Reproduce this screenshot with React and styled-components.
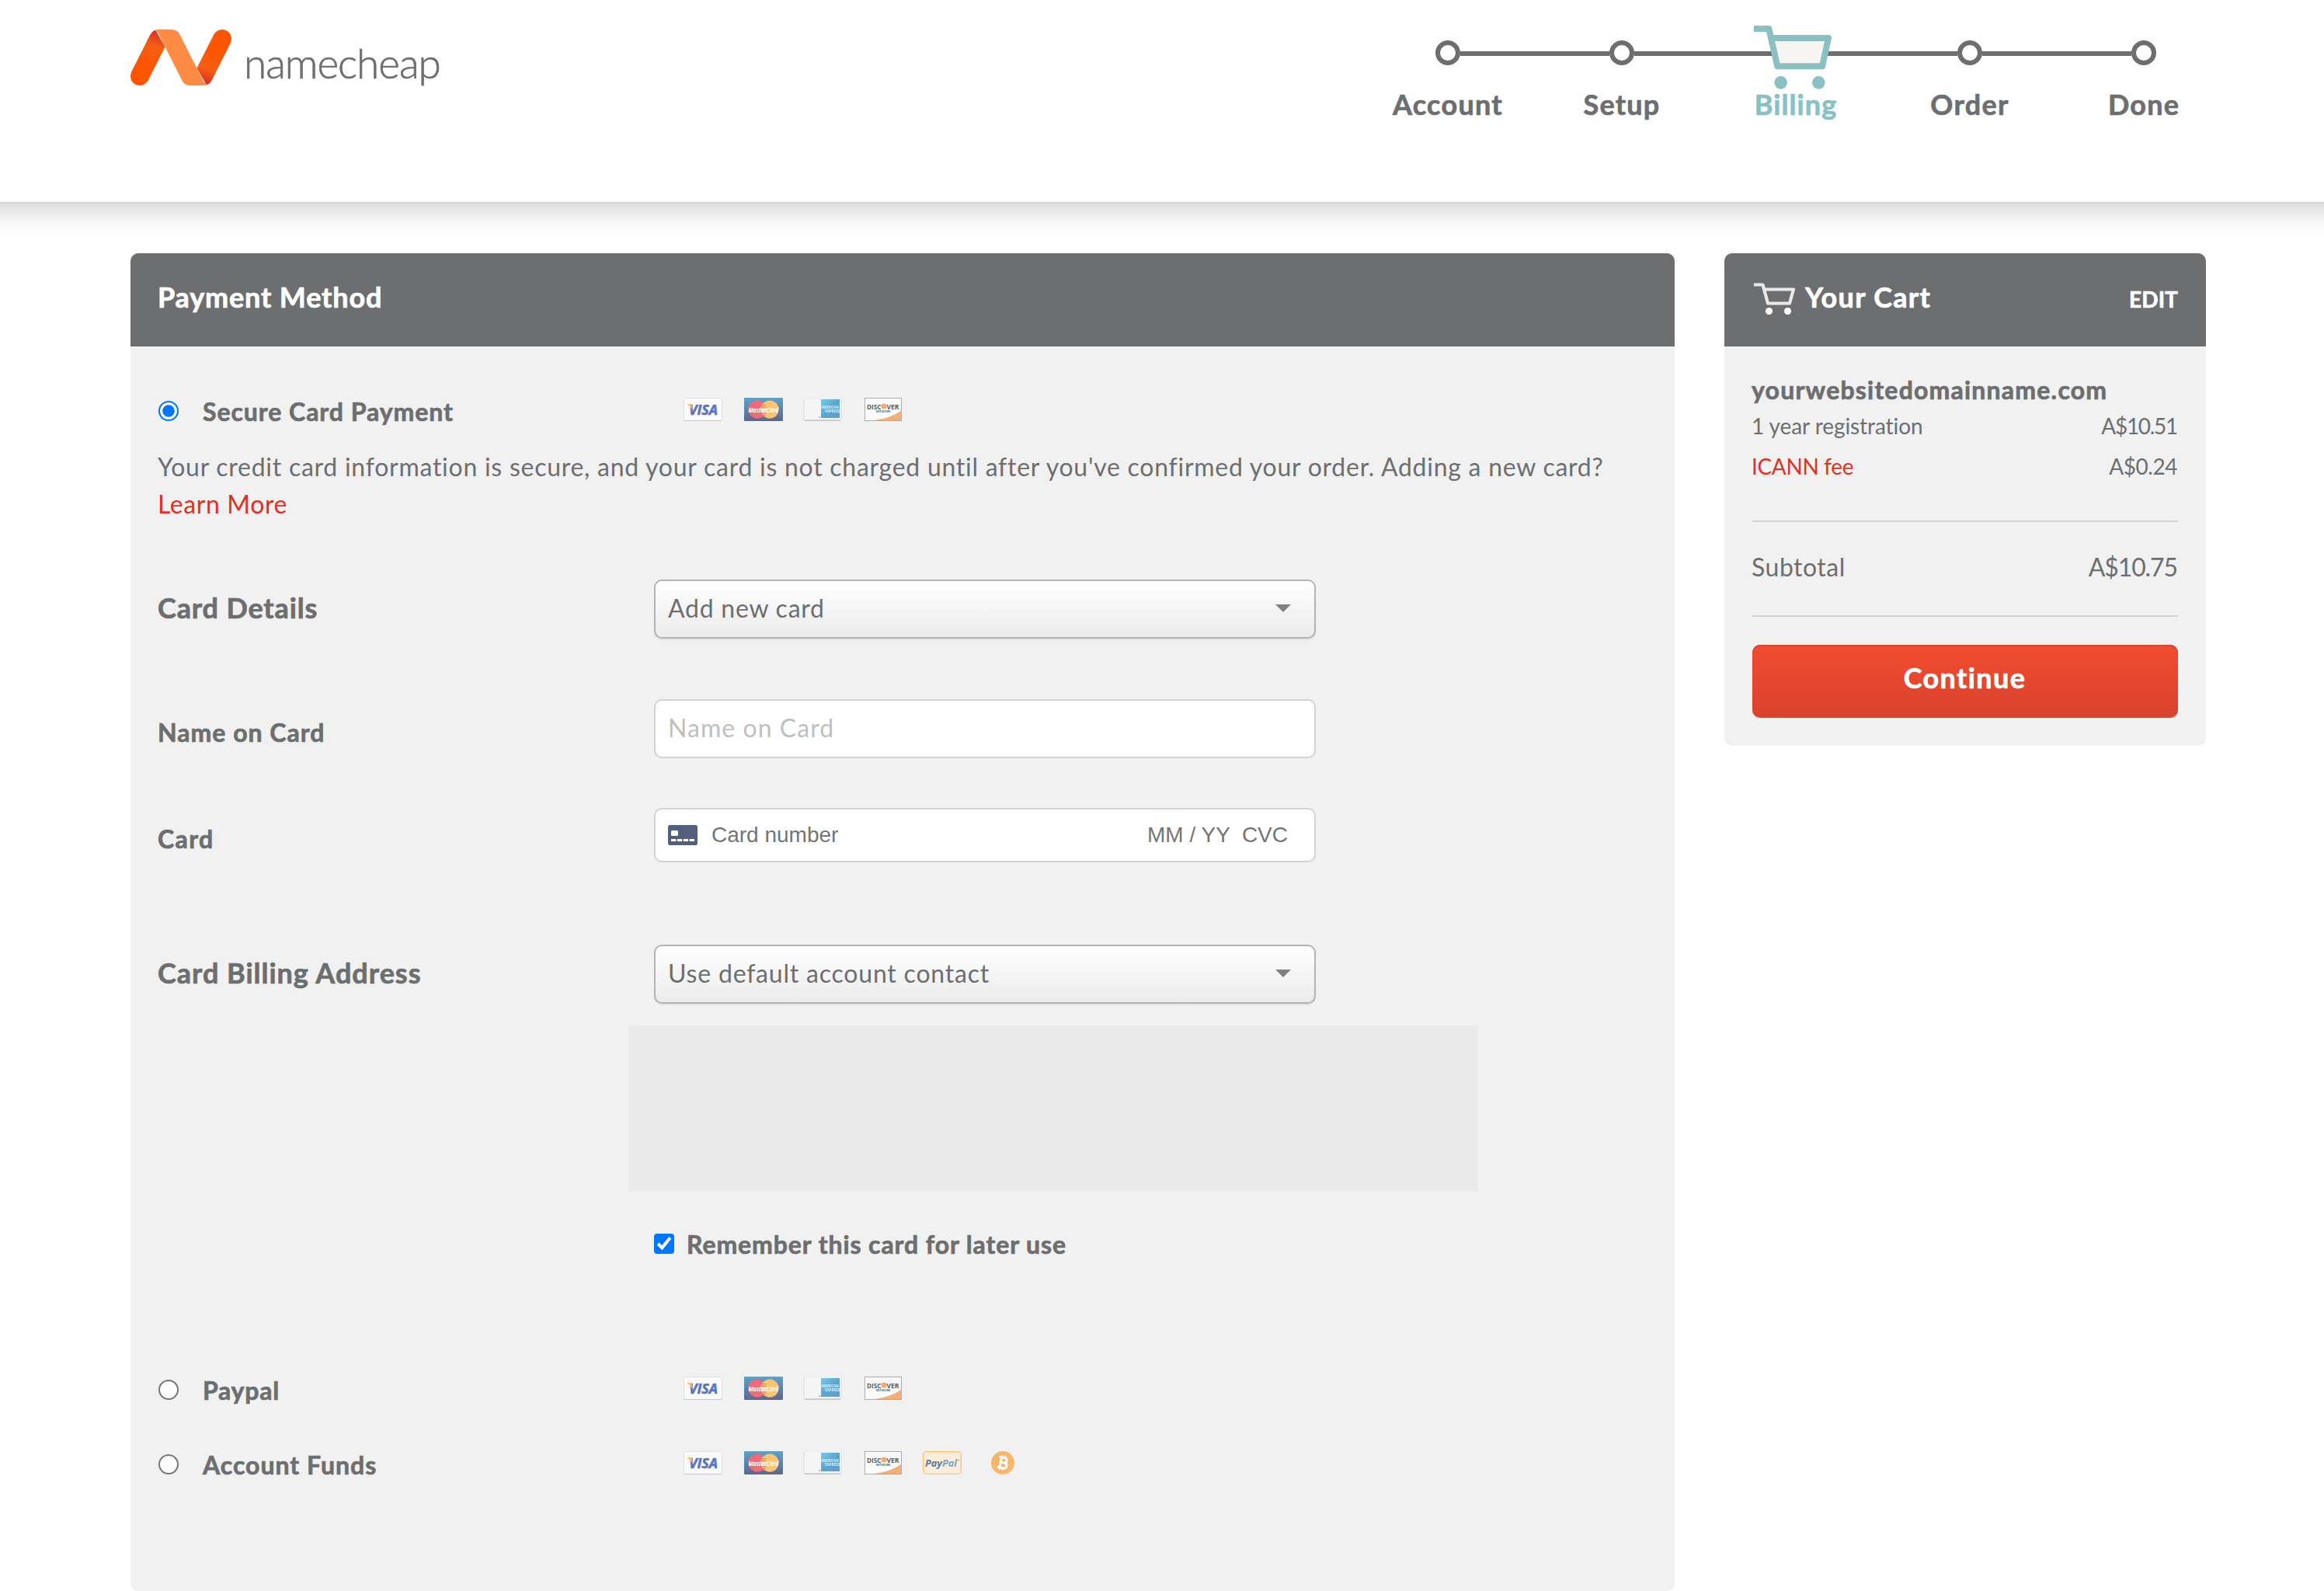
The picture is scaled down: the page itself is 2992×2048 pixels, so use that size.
import React, { useState } from 'react';
import styled, { createGlobalStyle, css } from 'styled-components';

const colors = {
  grey: '#6d6e70',
  panel: '#f1f1f1',
  line: '#d3d3d3',
  teal: '#8bc0c3',
  red: '#e0311f',
};

const GlobalStyle = createGlobalStyle`
  * {
    box-sizing: border-box;
  }

  body {
    margin: 0;
    background: #fefefe;
    color: ${colors.grey};
    font-family: Lato, 'Open Sans', sans-serif;
    font-size: 32px;
    overflow-x: hidden;
  }
`;

const tracking = css`
  letter-spacing: ${({ $track }) => $track || 0}px;
`;

const bold = css`
  font-weight: 700;
  -webkit-text-stroke: 0.7px currentColor;
`;

const Page = styled.div`
  width: 2992px;
  height: 2048px;
  overflow: hidden;
`;

/* ---------- header ---------- */

const Header = styled.header`
  display: flex;
  justify-content: space-between;
  height: 262px;
  padding: 0 120px 0 168px;
  border-bottom: 2px solid #d5d5d5;
`;

const HeaderShadow = styled.div`
  height: 38px;
  background: linear-gradient(#dedede, #efefef 42%, #fafafa 75%, #fefefe);
`;

const Brand = styled.div`
  display: flex;
  align-items: flex-start;
  gap: 16px;
  padding-top: 38px;
`;

const BrandMark = styled.svg`
  width: 130px;
  height: 72px;
`;

const BrandName = styled.span`
  margin-top: 11px;
  font-size: 53px;
  font-weight: 300;
  line-height: 64px;
  -webkit-text-stroke: 0.7px currentColor;
  ${tracking}
`;

const Steps = styled.ol`
  display: grid;
  grid-template-columns: repeat(5, 224px);
  margin: 0;
  padding: 52px 0 0;
  list-style: none;
`;

const StepItem = styled.li`
  color: ${({ $active }) => ($active ? colors.teal : colors.grey)};
  font-size: 36px;
  line-height: 40px;
  text-align: center;
`;

const StepTrack = styled.div`
  position: relative;
  display: flex;
  align-items: center;
  height: 32px;
  margin-bottom: 30px;
`;

const StepLine = styled.span`
  flex: 1;
  height: 6px;
  margin-top: 2px;
  background: ${({ $hidden }) => ($hidden ? 'transparent' : colors.grey)};
`;

const StepDot = styled.span`
  width: 32px;
  height: 32px;
  border: 6px solid ${colors.grey};
  border-radius: 50%;
  background: #fefefe;
`;

const StepCart = styled.svg`
  position: absolute;
  top: -19px;
  left: 58px;
  width: 100px;
  height: 82px;
`;

const StepName = styled.span`
  ${bold}
  ${tracking}
`;

/* ---------- panels ---------- */

const Content = styled.main`
  display: grid;
  grid-template-columns: 1988px 620px;
  align-items: start;
  gap: 64px;
  padding: 26px 0 0 168px;
`;

const Panel = styled.section`
  min-height: ${({ $tall }) => ($tall ? '1722px' : '0')};
  border-radius: 10px;
  background: ${colors.panel};
  overflow: hidden;
`;

const PanelHeader = styled.div`
  display: flex;
  align-items: center;
  height: 120px;
  padding: 0 36px 8px;
  background: ${colors.grey};
  color: #fff;
`;

const PanelTitle = styled.h2`
  margin: 0 0 0 -1px;
  font-size: 36px;
  line-height: 44px;
  ${bold}
  ${tracking}
`;

const PaymentBody = styled.div`
  padding: 62px 36px 0;
`;

const CartBody = styled.div`
  padding: 36px;
`;

/* ---------- payment form ---------- */

const Method = styled.label`
  display: grid;
  grid-template-columns: 26px 586px auto;
  column-gap: 32px;
  align-items: center;
  justify-content: start;
  height: 42px;
  margin-top: ${({ $top }) => $top || 0}px;
`;

// 13px control at double size keeps the native border proportions
const Choice = styled.input`
  width: 13px;
  height: 13px;
  margin: 0;
  zoom: 2;
`;

const MethodName = styled.span`
  margin: 2px 0 0 -1px;
  line-height: 40px;
  ${bold}
  ${tracking}
`;

const Cards = styled.div`
  display: flex;
  gap: 27px;
  margin: -4px 0 0 0;
`;

const CardArt = styled.svg`
  display: block;
  width: 50px;
  height: 30px;
  overflow: visible;
`;

const Note = styled.p`
  margin: 27px 0 -1px -1px;
  line-height: 48px;
  white-space: nowrap;
  ${tracking}
`;

const NoteLink = styled.a`
  display: block;
  color: ${colors.red};
  ${tracking}
`;

const FormRow = styled.div`
  display: grid;
  grid-template-columns: 638px 852px;
  height: ${({ $height }) => $height || 76}px;
  margin-top: ${({ $top }) => $top}px;
`;

const FieldLabel = styled.span`
  margin: ${({ $large }) => ($large ? '-2px' : '5px')} 0 0 -1px;
  font-size: ${({ $large }) => ($large ? '36px' : '32px')};
  line-height: ${({ $height }) => $height || 76}px;
  ${bold}
  ${tracking}
`;

const Select = styled.button`
  display: flex;
  align-items: center;
  justify-content: space-between;
  height: 76px;
  padding: 0 30px 3px 16px;
  border: 2px solid #b3b3b3;
  border-radius: 10px;
  background: linear-gradient(#fff, #ebebeb);
  box-shadow: 0 2px 1px rgba(0, 0, 0, 0.06);
  color: ${colors.grey};
  font: inherit;
  line-height: 40px;
  ${tracking}
`;

const Caret = styled.span`
  border: 10px solid transparent;
  border-top-color: #808184;
  border-bottom: 0;
`;

const Input = styled.input`
  height: 76px;
  padding: 0 16px 4px;
  border: 2px solid ${colors.line};
  border-radius: 10px;
  background: #fff;
  color: ${colors.grey};
  font: inherit;
  ${tracking}

  &::placeholder {
    color: #bfbfbf;
    opacity: 1;
  }
`;

const CardInput = styled.div`
  display: flex;
  align-items: center;
  height: 70px;
  padding: 0 34px 0 16px;
  border: 2px solid ${colors.line};
  border-radius: 10px;
  background: #fff;
  color: #757575;
  font: 28px 'Liberation Sans', Arial, sans-serif;
`;

const CardNumber = styled.span`
  flex: 1;
  margin-left: 18px;
`;

const Cvc = styled.span`
  margin-left: 15px;
`;

const AddressBox = styled.div`
  width: 1094px;
  height: 213px;
  margin: 28px 0 0 605px;
  background: #eaeaea;
`;

const Remember = styled.label`
  display: flex;
  align-items: center;
  gap: 17px;
  height: 42px;
  margin: 47px 0 0 638px;
`;

/* ---------- cart ---------- */

const CartIcon = styled.svg`
  width: 54px;
  height: 42px;
  margin: 3px 13px 0 2px;
`;

const EditLink = styled.a`
  margin: 6px 0 0 auto;
  font-size: 28px;
  line-height: 34px;
  ${bold}
  ${tracking}
`;

const Domain = styled.div`
  margin: 0 0 8px -1px;
  line-height: 40px;
  ${bold}
  ${tracking}
`;

const CartLine = styled.div`
  display: flex;
  justify-content: space-between;
  margin: 0 1px ${({ $gap }) => $gap || 0}px -1px;
  font-size: ${({ $large }) => ($large ? '32px' : '28px')};
  line-height: ${({ $large }) => ($large ? '40px' : '36px')};
`;

const CartText = styled.span`
  color: ${({ $link }) => ($link ? colors.red : 'inherit')};
  ${tracking}
`;

const Subtotal = styled.div`
  padding: 38px 0 42px;
  border: solid ${colors.line};
  border-width: 2px 0;
`;

const Continue = styled.button`
  display: block;
  width: 100%;
  height: 94px;
  margin-top: 36px;
  padding: 0 1px 10px 0;
  border: 0;
  border-radius: 10px;
  background: linear-gradient(#f24c30, #d8432d);
  box-shadow: inset 0 2px 1px #de432b, inset 0 0 2px #d8432d;
  color: #fff;
  font: 36px Lato, sans-serif;
  ${bold}
  ${tracking}
`;

/* ---------- drawings ---------- */

const Logo = () => (
  <BrandMark viewBox='84 114 388 216' preserveAspectRatio='none'>
    <defs>
      <linearGradient id='limb' gradientUnits='userSpaceOnUse' x1='120' y1='300' x2='180' y2='118'>
        <stop offset='0.25' stopColor='#ff5500' />
        <stop offset='0.7' stopColor='#f35f13' />
        <stop offset='0.97' stopColor='#dc3024' />
      </linearGradient>
      <path
        id='limbShape'
        d='M88 277 L157 139 Q167 119 180 116 L217 181 L152 310 Q141 330 120 330 A36 36 0 0 1 84 294 Q84 285 88 277 Z'
      />
    </defs>
    <use href='#limbShape' fill='url(#limb)' />
    <use href='#limbShape' fill='url(#limb)' transform='rotate(180 278 222)' />
    <path
      fill='#ff8c44'
      d='M176 118 Q182 114 192 114 H242 Q264 114 273 132 L364 313 Q370 325 380 326 Q374 330 364 330 H314 Q292 330 283 312 L192 131 Q186 119 176 118 Z'
    />
  </BrandMark>
);

const BillingCart = () => (
  <StepCart viewBox='54 39 300 246'>
    <path d='M128 87 H342 L317 195 H145 Z' fill='#f8f4f2' />
    <path
      d='M54 51 H112 L145 196 H318 L342 87 H125'
      fill='none'
      stroke={colors.teal}
      strokeWidth='24'
      strokeLinejoin='round'
    />
    <circle cx='158' cy='259' r='25' fill={colors.teal} />
    <circle cx='304' cy='259' r='25' fill={colors.teal} />
  </StepCart>
);

const SmallCart = () => (
  <CartIcon viewBox='0 0 54 42' fill='none' stroke='#fff' strokeWidth='4.2'>
    <path d='M0 3.5 H11.5 L18 27.5 H46 L51 9.5 H14' strokeLinejoin='round' opacity='0.85' />
    <circle cx='19.5' cy='37.5' r='4.6' fill='#fff' stroke='none' />
    <circle cx='43.5' cy='37.5' r='4.6' fill='#fff' stroke='none' />
  </CartIcon>
);

const artFont = { fontFamily: 'Open Sans, sans-serif', fontWeight: 700 };

const Visa = () => (
  <CardArt viewBox='0 0 50 30'>
    <rect x='0.5' y='0.5' width='49' height='29' rx='1.5' fill='#fafafa' stroke='#dfe1e2' />
    <path d='M1 29.5 H49' stroke='#c3c8c9' />
    <text x='7' y='21.5' fontSize='18' fontStyle='italic' fill='#5a74c4' stroke='#5a74c4' strokeWidth='0.6' textLength='37' lengthAdjust='spacingAndGlyphs' {...artFont}>
      VISA
    </text>
    <path d='M4 8 H9 Q11 8.5 11.5 16 Q9 10.5 4 8 Z' fill='#f8c169' />
  </CardArt>
);

const MasterCard = () => (
  <CardArt viewBox='-1 0 50 30'>
    <defs>
      <linearGradient id='mc' x1='0' y1='0' x2='0' y2='1'>
        <stop offset='0' stopColor='#5da3c8' />
        <stop offset='1' stopColor='#5b6591' />
      </linearGradient>
    </defs>
    <rect width='50' height='30' rx='1' fill='url(#mc)' />
    <circle cx='17' cy='15' r='11.5' fill='#ef6b78' />
    <circle cx='33' cy='15' r='11.5' fill='#fbc574' />
    <path d='M23 9.5 H28 M22 12 H28 M22 20 H28 M23 22.5 H27' stroke='#ef6b78' />
    <text x='5.5' y='18.5' fontSize='9.5' fontStyle='italic' fill='#fff' textLength='38.5' lengthAdjust='spacingAndGlyphs' {...artFont}>
      MasterCard
    </text>
  </CardArt>
);

const Amex = () => (
  <CardArt viewBox='0 0 50 30'>
    <defs>
      <linearGradient id='amex' x1='0' y1='0' x2='1' y2='1'>
        <stop offset='0' stopColor='#74cbe9' />
        <stop offset='0.5' stopColor='#5ba6d2' />
        <stop offset='1' stopColor='#5f9ccb' />
      </linearGradient>
    </defs>
    <path d='M1 2 V27.5 Q1 29 3 29 H47 Q49 29 49 27.5 V2' fill='#f5f5f5' stroke='#dcdcdc' />
    <path d='M2 29.2 H48' stroke='#c4c4c4' strokeWidth='1.4' />
    <rect x='23' y='2' width='24' height='24' fill='url(#amex)' />
    <rect x='20' y='24.2' width='2' height='2' fill='#8ccbe2' />
    <text x='23.5' y='13.8' fontSize='5.4' fill='#dff0f8' textLength='22' lengthAdjust='spacingAndGlyphs' {...artFont}>
      AMERICAN
    </text>
    <text x='28' y='19' fontSize='5.4' fill='#dff0f8' textLength='19' lengthAdjust='spacingAndGlyphs' {...artFont}>
      EXPRESS
    </text>
  </CardArt>
);

const Discover = () => (
  <CardArt viewBox='-2 0 50 30'>
    <rect x='0.5' y='0.5' width='47' height='29' fill='#fafafa' stroke='#acadae' />
    <path d='M13 29 Q34 26 47 17 V29 Z' fill='#f4ae77' />
    <circle cx='25' cy='11' r='3.6' fill='#f5a873' />
    <text x='3' y='14.5' fontSize='9.5' fill='#4f6068' textLength='18.5' lengthAdjust='spacingAndGlyphs' {...artFont}>
      DISC
    </text>
    <text x='28.5' y='14.5' fontSize='9.5' fill='#4f6068' textLength='16' lengthAdjust='spacingAndGlyphs' {...artFont}>
      VER
    </text>
    <text x='14.5' y='19' fontSize='4' fill='#6a7377' textLength='19' {...artFont}>
      NETWORK
    </text>
  </CardArt>
);

const PayPal = () => (
  <CardArt viewBox='0 0 50 30'>
    <rect x='0.7' y='0.7' width='48.6' height='28.6' rx='4' fill='#fbeddb' stroke='#f8c36c' strokeWidth='1.3' />
    <text x='3' y='19.5' fontSize='13' fontStyle='italic' textLength='41' lengthAdjust='spacingAndGlyphs' {...artFont}>
      <tspan fill='#5b7a9e'>Pay</tspan>
      <tspan fill='#7ea3c2'>Pal</tspan>
    </text>
    <path d='M44.5 11.5 H48.5' stroke='#9fb2c2' strokeWidth='1' />
  </CardArt>
);

const Bitcoin = () => (
  <CardArt viewBox='0 0 50 30'>
    <circle cx='26' cy='15' r='15' fill='#f6b66b' />
    <g transform='rotate(12 26 15)' fill='none' stroke='#fff' strokeWidth='2.8'>
      <path d='M20 8.5 H27 Q30.5 8.5 30.5 11.6 Q30.5 14.6 27 14.6 H23.5 H28 Q31.8 14.8 31.8 18 Q31.8 21.5 28 21.5 H20' />
      <path d='M23.2 8.5 V21.5' />
      <path d='M23.8 5.5 V8.5 M27.6 5.5 V8.5 M23.8 21.5 V24.5 M27.6 21.5 V24.5' strokeWidth='2' />
    </g>
  </CardArt>
);

const CardIcon = () => (
  <svg width='38' height='26' viewBox='0 0 38 26'>
    <rect width='38' height='26' rx='2.5' fill='#525f7f' />
    <rect x='4' y='7' width='9' height='7' rx='1.5' fill='#fff' />
    <path d='M4 19.5 H34' stroke='#fff' strokeWidth='3' strokeDasharray='6.3 1.6' />
  </svg>
);

/* ---------- data ---------- */

const steps = [
  { name: 'Account', track: 1.3 },
  { name: 'Setup', track: 1.2 },
  { name: 'Billing', track: 1.1, active: true },
  { name: 'Order', track: 1.3 },
  { name: 'Done', track: 1.2 },
];

const methods = [
  { id: 'paypal', name: 'Paypal', track: 0.75, top: 146, cards: [Visa, MasterCard, Amex, Discover] },
  {
    id: 'funds',
    name: 'Account Funds',
    track: 1,
    top: 54,
    cards: [Visa, MasterCard, Amex, Discover, PayPal, Bitcoin],
  },
];

const PaymentMethod = ({ name, track, top, cards, checked, onChange }) => (
  <Method $top={top}>
    <Choice type='radio' name='method' checked={checked} onChange={onChange} />
    <MethodName $track={track}>{name}</MethodName>
    <Cards>
      {cards.map((Art, index) => (
        <Art key={index} />
      ))}
    </Cards>
  </Method>
);

const App = () => {
  const [method, setMethod] = useState('card');
  const [remember, setRemember] = useState(true);

  return (
    <Page>
      <GlobalStyle />
      <Header>
        <Brand>
          <Logo />
          <BrandName $track={-1}>namecheap</BrandName>
        </Brand>
        <Steps>
          {steps.map(({ name, track, active }, index) => (
            <StepItem key={name} $active={active}>
              <StepTrack>
                <StepLine $hidden={index === 0} />
                {!active && <StepDot />}
                <StepLine $hidden={index === steps.length - 1} />
                {active && <BillingCart />}
              </StepTrack>
              <StepName $track={track}>{name}</StepName>
            </StepItem>
          ))}
        </Steps>
      </Header>
      <HeaderShadow />

      <Content>
        <Panel $tall>
          <PanelHeader>
            <PanelTitle $track={0.85}>Payment Method</PanelTitle>
          </PanelHeader>
          <PaymentBody>
            <PaymentMethod
              name='Secure Card Payment'
              track={0.95}
              cards={[Visa, MasterCard, Amex, Discover]}
              checked={method === 'card'}
              onChange={() => setMethod('card')}
            />
            <Note $track={0.74}>
              Your credit card information is secure, and your card is not charged until after you've confirmed
              your order. Adding a new card?
              <NoteLink $track={0.6}>Learn More</NoteLink>
            </Note>

            <FormRow $top={74}>
              <FieldLabel $large $track={0.85}>Card Details</FieldLabel>
              <Select $track={0.75}>
                Add new card
                <Caret />
              </Select>
            </FormRow>
            <FormRow $top={78}>
              <FieldLabel $track={1}>Name on Card</FieldLabel>
              <Input placeholder='Name on Card' $track={1.05} />
            </FormRow>
            <FormRow $top={64} $height={70}>
              <FieldLabel $height={70} $track={1.4}>Card</FieldLabel>
              <CardInput>
                <CardIcon />
                <CardNumber>Card number</CardNumber>
                <span>MM / YY</span>
                <Cvc>CVC</Cvc>
              </CardInput>
            </FormRow>
            <FormRow $top={106}>
              <FieldLabel $large $track={0.98}>Card Billing Address</FieldLabel>
              <Select $track={0.8}>
                Use default account contact
                <Caret />
              </Select>
            </FormRow>
            <AddressBox />
            <Remember>
              <Choice type='checkbox' checked={remember} onChange={() => setRemember(!remember)} />
              <MethodName $track={0.9}>Remember this card for later use</MethodName>
            </Remember>

            {methods.map(({ id, ...rest }) => (
              <PaymentMethod key={id} {...rest} checked={method === id} onChange={() => setMethod(id)} />
            ))}
          </PaymentBody>
        </Panel>

        <Panel>
          <PanelHeader>
            <SmallCart />
            <PanelTitle $track={1.3}>Your Cart</PanelTitle>
            <EditLink $track={0.1}>EDIT</EditLink>
          </PanelHeader>
          <CartBody>
            <Domain $track={1.2}>yourwebsitedomainname.com</Domain>
            <CartLine $gap={16}>
              <CartText $track={-0.08}>1 year registration</CartText>
              <CartText $track={-1.3}>A$10.51</CartText>
            </CartLine>
            <CartLine $gap={52}>
              <CartText $link $track={-0.35}>ICANN fee</CartText>
              <CartText $track={-0.45}>A$0.24</CartText>
            </CartLine>
            <Subtotal>
              <CartLine $large>
                <CartText $track={0.5}>Subtotal</CartText>
                <CartText $track={-1.1}>A$10.75</CartText>
              </CartLine>
            </Subtotal>
            <Continue $track={1.4}>Continue</Continue>
          </CartBody>
        </Panel>
      </Content>
    </Page>
  );
};

export default App;
